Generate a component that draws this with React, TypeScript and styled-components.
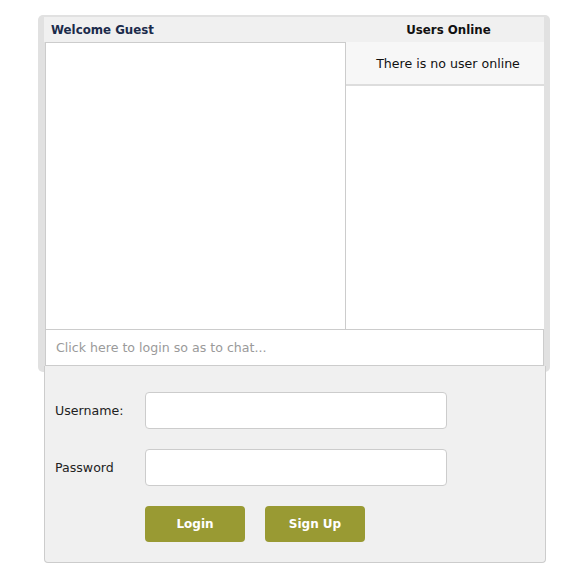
import React from "react";
import styled, { createGlobalStyle } from "styled-components";

const Global = createGlobalStyle`
  html, body { margin: 0; padding: 0; background: #ffffff; }
  body { font-family: Tahoma, "DejaVu Sans", Verdana, sans-serif; font-size: 12.6px; color: #222; }
  * { box-sizing: border-box; }
`;

const Page = styled.div`
  padding: 15px 0 0 38px;
  width: 549px;
`;

const ChatBox = styled.div`
  width: 512px;
  background: #e1e1e1;
  border-radius: 5px;
  padding: 2px 6px 6px 7px;
`;

const Header = styled.div`
  display: flex;
  height: 25px;
  background: #f0f0f0;
  align-items: center;
  margin-left: -1px;
`;

const Welcome = styled.div`
  flex: 1;
  padding-left: 7px;
  font-weight: bold;
  font-size: 11.8px;
  color: #1b2b4b;
`;

const UsersTitle = styled.div`
  width: 198px;
  padding-left: 7px;
  text-align: center;
  font-weight: bold;
  font-size: 11.8px;
  color: #111;
`;

const Body = styled.div`
  display: flex;
  height: 287px;
  background: #fff;
`;

const Messages = styled.div`
  width: 301px;
  border: 1px solid #cccccc;
  border-bottom: none;
  background: #fff;
`;

const UsersPanel = styled.div`
  flex: 1;
  background: #fff;
`;

const NoUsers = styled.div`
  height: 44px;
  background: #f7f7f7;
  border-bottom: 2px solid #dddddd;
  display: flex;
  align-items: center;
  justify-content: center;
  padding-left: 6px;
  color: #111;
`;

const ChatInput = styled.div`
  height: 37px;
  border: 1px solid #cccccc;
  background: #fff;
  display: flex;
  align-items: center;
  padding-left: 10px;
  color: #9a9a9a;
`;

const LoginBox = styled.div`
  position: relative;
  margin: -6px 0 0 6px;
  width: 502px;
  height: 197px;
  background: #f0f0f0;
  border: 1px solid #cccccc;
  border-top: none;
  border-radius: 0 0 4px 4px;
  padding: 26px 0 0 10px;
  display: flex;
  flex-direction: column;
  gap: 20px;
`;

const Row = styled.div`
  display: flex;
  align-items: center;
`;

const Label = styled.div`
  width: 90px;
  color: #222;
`;

const Field = styled.div`
  width: 302px;
  height: 37px;
  background: #fff;
  border: 1px solid #cccccc;
  border-radius: 4px;
`;

const Buttons = styled.div`
  display: flex;
  gap: 20px;
  padding-left: 90px;
`;

const Button = styled.div`
  width: 100px;
  height: 36px;
  background: #999a33;
  border-radius: 4px;
  color: #fff;
  font-weight: bold;
  font-size: 12px;
  display: flex;
  align-items: center;
  justify-content: center;
`;

export default function App() {
  return (
    <Page>
      <Global />
      <ChatBox>
        <Header>
          <Welcome>Welcome Guest</Welcome>
          <UsersTitle>Users Online</UsersTitle>
        </Header>
        <Body>
          <Messages />
          <UsersPanel>
            <NoUsers>There is no user online</NoUsers>
          </UsersPanel>
        </Body>
        <ChatInput>Click here to login so as to chat...</ChatInput>
      </ChatBox>
      <LoginBox>
        <Row>
          <Label>Username:</Label>
          <Field />
        </Row>
        <Row>
          <Label>Password</Label>
          <Field />
        </Row>
        <Buttons>
          <Button>Login</Button>
          <Button>Sign Up</Button>
        </Buttons>
      </LoginBox>
    </Page>
  );
}
